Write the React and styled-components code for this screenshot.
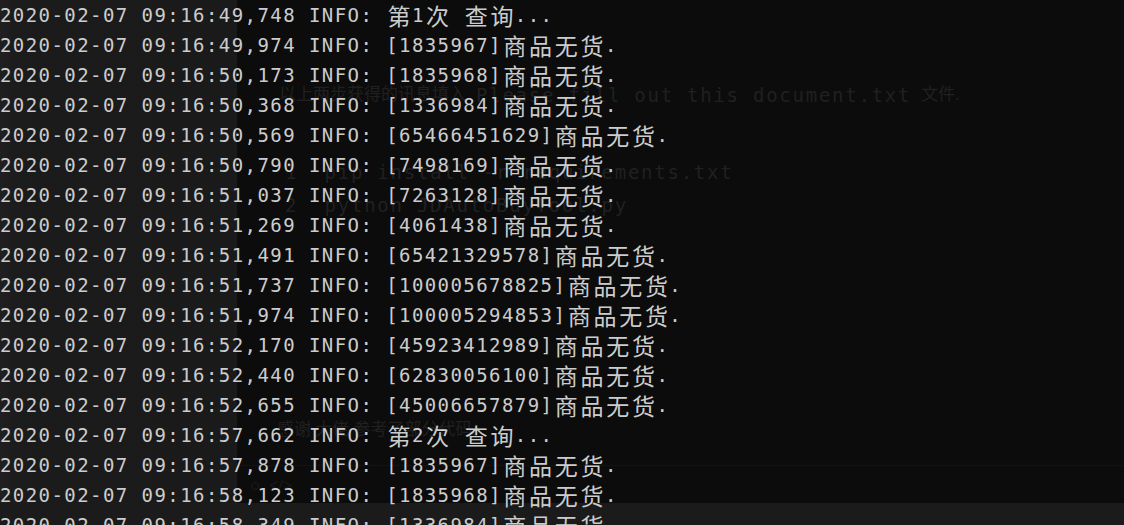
import styled, { createGlobalStyle } from "styled-components";

const CELL = 12.87;

const GlobalStyle = createGlobalStyle`
  html, body {
    margin: 0;
    padding: 0;
    background: #0c0c0c;
  }
`;

const Screen = styled.div`
  position: relative;
  width: 1124px;
  height: 525px;
  overflow: hidden;
  background:
    linear-gradient(to bottom, transparent 503px, #1b1b1b 503px),
    linear-gradient(to right, #202020 0, #1c1c1c 12px, #1b1b1b 34px, #1a1a1a 237px, #0c0c0c 237px);
`;

/* faint window showing through the console behind the log */
const Ghost = styled.div`
  position: absolute;
  top: 83px;
  left: 250px;
  right: 0;
  z-index: 0;
  display: flex;
  flex-direction: column;
  color: #202020;
  pointer-events: none;
`;

const GhostLine = styled.div`
  display: flex;
  gap: 10px;
  height: 24px;
  line-height: 24px;
  margin-top: ${(p) => p.gap || 0}px;
  padding-left: ${(p) => p.indent || 0}px;
  white-space: pre;
  font-family: "DejaVu Sans Mono", "Noto Sans CJK SC", monospace;
  font-size: 19px;
  letter-spacing: 1.75px;
`;

const GhostCjk = styled.span`
  font-family: "Liberation Serif", "Noto Sans CJK SC", serif;
  font-size: 17px;
  letter-spacing: 0;
`;

const GhostRule = styled.div`
  height: 1px;
  margin: 23px 0 0 -13px;
  background: #131313;
`;

const Log = styled.div`
  position: relative;
  z-index: 1;
  display: flex;
  flex-direction: column;
`;

const Row = styled.div`
  height: 30px;
  line-height: 30px;
  white-space: pre;
  color: #cccccc;
  font-family: "DejaVu Sans Mono", monospace;
  font-size: 19px;
  letter-spacing: ${CELL - 19 * 0.602}px;
`;

const Wide = styled.span`
  display: inline-block;
  width: ${CELL * 2}px;
  text-align: center;
  letter-spacing: 0;
  font-family: "Noto Sans CJK SC", sans-serif;
  font-size: 23px;
  vertical-align: top;
`;

const lines = [
  ["49,748", "第1次 查询..."],
  ["49,974", "[1835967]商品无货."],
  ["50,173", "[1835968]商品无货."],
  ["50,368", "[1336984]商品无货."],
  ["50,569", "[65466451629]商品无货."],
  ["50,790", "[7498169]商品无货."],
  ["51,037", "[7263128]商品无货."],
  ["51,269", "[4061438]商品无货."],
  ["51,491", "[65421329578]商品无货."],
  ["51,737", "[100005678825]商品无货."],
  ["51,974", "[100005294853]商品无货."],
  ["52,170", "[45923412989]商品无货."],
  ["52,440", "[62830056100]商品无货."],
  ["52,655", "[45006657879]商品无货."],
  ["57,662", "第2次 查询..."],
  ["57,878", "[1835967]商品无货."],
  ["58,123", "[1835968]商品无货."],
  ["58,349", "[1336984]商品无货."],
];

const isWide = (ch) => /[\u3000-\u9fff\uff00-\uffef]/.test(ch);

// split a line into narrow runs and double-cell CJK glyphs
const renderCells = (text) => {
  const out = [];
  let run = "";
  [...text].forEach((ch, i) => {
    if (isWide(ch)) {
      if (run) out.push(run);
      run = "";
      out.push(<Wide key={i}>{ch}</Wide>);
    } else {
      run += ch;
    }
  });
  if (run) out.push(run);
  return out;
};

const App = () => {
  return (
    <>
      <GlobalStyle />
      <Screen>
        <Ghost>
          <GhostLine indent={29}>
            <GhostCjk>以上两步获得的讯息填入</GhostCjk>
            <span>Please fill out this document.txt</span>
            <GhostCjk>文件.</GhostCjk>
          </GhostLine>
          <GhostLine gap={53} indent={35}>1  pip install -r requirements.txt</GhostLine>
          <GhostLine gap={9} indent={35}>2  python JDAutoBuyTool.py</GhostLine>
          <GhostLine gap={201} indent={27}>
            <GhostCjk>感谢 大佬 参考了部分代码.</GhostCjk>
          </GhostLine>
          <GhostRule />
          <GhostLine gap={8}>
            <GhostCjk>○  &lt;/&gt;</GhostCjk>
          </GhostLine>
        </Ghost>
        <Log>
          {lines.map(([time, msg], i) => (
            <Row key={i}>
              {`2020-02-07 09:16:${time} INFO: `}
              {renderCells(msg)}
            </Row>
          ))}
        </Log>
      </Screen>
    </>
  );
};

export default App;
